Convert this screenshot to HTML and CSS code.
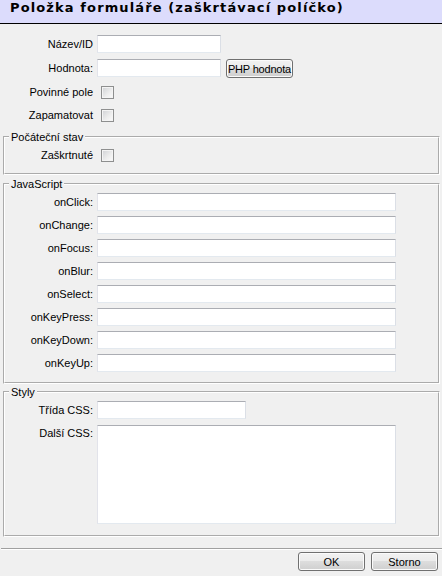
FILE: index.html
```html
<!DOCTYPE html>
<html lang="cs">
<head>
<meta charset="utf-8">
<title>Položka formuláře</title>
<link rel="stylesheet" href="styles.css">
</head>
<body>
<div class="dialog">
  <div class="title">Položka formuláře (zaškrtávací políčko)</div>
  <div class="top">
    <div class="row"><label class="lbl">Název/ID</label><input class="txt w-short" type="text"></div>
    <div class="row"><label class="lbl">Hodnota:</label><div class="inline"><input class="txt w-short" type="text"><button class="btn btn-php" type="button">PHP hodnota</button></div></div>
    <div class="row"><label class="lbl">Povinné pole</label><input class="chk" type="checkbox"></div>
    <div class="row row-tight"><label class="lbl">Zapamatovat</label><input class="chk" type="checkbox"></div>
  </div>

  <fieldset class="group g1">
    <legend>Počáteční stav</legend>
    <div class="frow"><label class="lbl">Zaškrtnuté</label><input class="chk" type="checkbox"></div>
  </fieldset>

  <fieldset class="group g2">
    <legend>JavaScript</legend>
    <div class="frow"><label class="lbl">onClick:</label><input class="txt w-long" type="text"></div>
    <div class="frow"><label class="lbl">onChange:</label><input class="txt w-long" type="text"></div>
    <div class="frow"><label class="lbl">onFocus:</label><input class="txt w-long" type="text"></div>
    <div class="frow"><label class="lbl">onBlur:</label><input class="txt w-long" type="text"></div>
    <div class="frow"><label class="lbl">onSelect:</label><input class="txt w-long" type="text"></div>
    <div class="frow"><label class="lbl">onKeyPress:</label><input class="txt w-long" type="text"></div>
    <div class="frow"><label class="lbl">onKeyDown:</label><input class="txt w-long" type="text"></div>
    <div class="frow"><label class="lbl">onKeyUp:</label><input class="txt w-long" type="text"></div>
  </fieldset>

  <fieldset class="group g3">
    <legend>Styly</legend>
    <div class="frow"><label class="lbl">Třída CSS:</label><input class="txt w-mid" type="text"></div>
    <div class="frow frow-area"><label class="lbl lbl-top">Další CSS:</label><textarea class="area"></textarea></div>
  </fieldset>

  <div class="sep"></div>
  <div class="buttons">
    <button class="btn btn-dlg" type="button">OK</button>
    <button class="btn btn-dlg" type="button">Storno</button>
  </div>
</div>
</body>
</html>
```
FILE: styles.css
```css
html, body {
  margin: 0;
  padding: 0;
}
body {
  background: #f0f0f0;
  font: 11px "Liberation Sans", Arial, sans-serif;
  color: #000;
  width: 442px;
  height: 576px;
  overflow: hidden;
}
.dialog {
  width: 442px;
}
.title {
  height: 23px;
  line-height: 23px;
  border-bottom: 1px solid #000;
  background: #dcdcfc;
  padding-left: 10px;
  font: bold 13px "DejaVu Sans", Verdana, sans-serif;
  letter-spacing: 1.12px;
  color: #000;
  white-space: nowrap;
}
.top {
  padding-top: 11px;
  display: flex;
  flex-direction: column;
  gap: 6px;
}
.row {
  display: grid;
  grid-template-columns: 93px auto;
  column-gap: 4px;
  align-items: center;
  height: 18px;
}
.row-tight {
  margin-top: -1px;
}
.lbl {
  text-align: right;
  white-space: nowrap;
}
.inline {
  display: flex;
  align-items: flex-start;
  gap: 5px;
  height: 18px;
}
.txt {
  box-sizing: border-box;
  height: 18px;
  margin: 0;
  padding: 0 2px;
  border: 1px solid;
  border-color: #abadb3 #dbdfe6 #e3e9ef #e2e3ea;
  background: #fff;
  font: inherit;
  outline: none;
}
.w-short { width: 124px; }
.w-mid { width: 149px; }
.w-long { width: 299px; }
.chk {
  -webkit-appearance: none;
  appearance: none;
  box-sizing: border-box;
  width: 13px;
  height: 13px;
  margin: 0 0 0 4px;
  border: 1px solid #8e8f8f;
  background: linear-gradient(135deg, #cfd1d4 0%, #eeeeee 60%, #fbfbfb 100%);
  box-shadow: inset 0 0 0 1px #f4f4f4;
}
.btn {
  box-sizing: border-box;
  margin: 0;
  padding: 0;
  border: 1px solid #707070;
  border-radius: 3px;
  background: linear-gradient(#f2f2f2 0%, #ebebeb 50%, #dddddd 50%, #cfcfcf 100%);
  box-shadow: inset 0 0 0 1px #fbfbfb;
  font: 11px "Liberation Sans", Arial, sans-serif;
  color: #000;
  white-space: nowrap;
}
.btn-php {
  width: 67px;
  height: 19px;
  letter-spacing: -0.2px;
}
.group {
  margin: 6px 2px 0 3px;
  padding: 0;
  border: 2px groove #ffffff;
  min-width: 0;
}
.group legend {
  margin-left: 4px;
  padding: 0 2px;
  line-height: 14px;
  height: 14px;
}
.frow {
  display: grid;
  grid-template-columns: 88px auto;
  column-gap: 4px;
  align-items: center;
  min-height: 18px;
}
.g1 {
  padding: 2px 0 9px;
}
.g2 {
  margin-top: 2px;
  padding: 2px 0 10px;
  display: flex;
  flex-direction: column;
  gap: 5px;
}
.g3 {
  margin-top: 1px;
  padding: 2px 0 11px;
  display: flex;
  flex-direction: column;
  gap: 6px;
}
.frow-area {
  align-items: start;
}
.lbl-top {
  line-height: 16px;
}
.area {
  box-sizing: border-box;
  width: 299px;
  height: 99px;
  margin: 0;
  padding: 2px;
  border: 1px solid;
  border-color: #abadb3 #dbdfe6 #e3e9ef #e2e3ea;
  background: #fff;
  resize: none;
  font: inherit;
  outline: none;
  display: block;
}
.sep {
  margin: 11px 0 0 1px;
  border-top: 1px solid #a0a0a0;
  border-bottom: 1px solid #ffffff;
}
.buttons {
  display: flex;
  justify-content: flex-end;
  gap: 6px;
  padding: 2px 4px 0 0;
}
.btn-dlg {
  width: 67px;
  height: 19px;
}
```
